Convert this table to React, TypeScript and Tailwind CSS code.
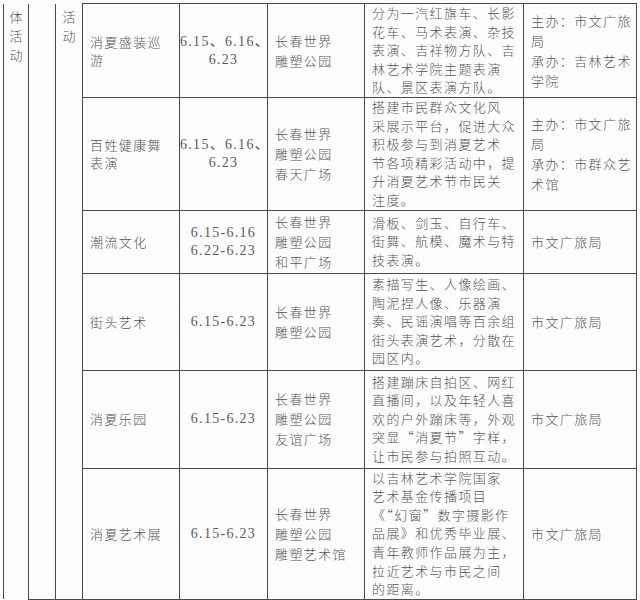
const rows = [
  {
    h: "h-[94px]",
    name: ["消夏盛装巡", "游"],
    date: ["6.15、6.16、", "6.23"],
    place: ["长春世界", "雕塑公园"],
    desc: [
      "分为一汽红旗车、长影",
      "花车、马术表演、杂技",
      "表演、吉祥物方队、吉",
      "林艺术学院主题表演",
      "队、景区表演方队。",
    ],
    org: ["主办：市文广旅", "局", "承办：吉林艺术", "学院"],
  },
  {
    h: "h-[112px]",
    name: ["百姓健康舞", "表演"],
    date: ["6.15、6.16、", "6.23"],
    place: ["长春世界", "雕塑公园", "春天广场"],
    desc: [
      "搭建市民群众文化风",
      "采展示平台，促进大众",
      "积极参与到消夏艺术",
      "节各项精彩活动中，提",
      "升消夏艺术节市民关",
      "注度。",
    ],
    org: ["主办：市文广旅", "局", "承办：市群众艺", "术馆"],
  },
  {
    h: "h-[63px]",
    name: ["潮流文化"],
    date: ["6.15-6.16", "6.22-6.23"],
    place: ["长春世界", "雕塑公园", "和平广场"],
    desc: ["滑板、剑玉、自行车、", "街舞、航模、魔术与特", "技表演。"],
    org: ["市文广旅局"],
  },
  {
    h: "h-[97px]",
    name: ["街头艺术"],
    date: ["6.15-6.23"],
    place: ["长春世界", "雕塑公园"],
    desc: [
      "素描写生、人像绘画、",
      "陶泥捏人像、乐器演",
      "奏、民谣演唱等百余组",
      "街头表演艺术，分散在",
      "园区内。",
    ],
    org: ["市文广旅局"],
  },
  {
    h: "h-[98px]",
    name: ["消夏乐园"],
    date: ["6.15-6.23"],
    place: ["长春世界", "雕塑公园", "友谊广场"],
    desc: [
      "搭建蹦床自拍区、网红",
      "直播间，以及年轻人喜",
      "欢的户外蹦床等，外观",
      "突显“消夏节”字样，",
      "让市民参与拍照互动。",
    ],
    org: ["市文广旅局"],
  },
  {
    h: "h-[131px]",
    name: ["消夏艺术展"],
    date: ["6.15-6.23"],
    place: ["长春世界", "雕塑公园", "雕塑艺术馆"],
    desc: [
      "以吉林艺术学院国家",
      "艺术基金传播项目",
      "《“幻窗”数字摄影作",
      "品展》和优秀毕业展、",
      "青年教师作品展为主，",
      "拉近艺术与市民之间",
      "的距离。",
    ],
    org: ["市文广旅局"],
  },
];

function Lines({ items }: { items: string[] }) {
  return (
    <>
      {items.map((t, i) => (
        <div key={i} className="whitespace-nowrap">
          {t}
        </div>
      ))}
    </>
  );
}

export default function App() {
  const cell = "border border-[#4a4a4a] align-middle";
  return (
    <div
      className="w-[640px] h-[600px] bg-[#fdfdfd] pt-[3px] pl-[3px] overflow-hidden text-[#555] text-[13px] tracking-[1.4px]"
      style={{ fontFamily: '"Noto Sans CJK SC", sans-serif' }}
    >
      <table className="table-fixed border-collapse w-[633px]">
        <colgroup>
          <col className="w-[25px]" />
          <col className="w-[27px]" />
          <col className="w-[27px]" />
          <col className="w-[97px]" />
          <col className="w-[88px]" />
          <col className="w-[97px]" />
          <col className="w-[159px]" />
          <col className="w-[113px]" />
        </colgroup>
        <tbody>
          {rows.map((r, i) => (
            <tr key={i} className={r.h}>
              {i === 0 && (
                <>
                  <td
                    rowSpan={6}
                    className="border-x border-[#4a4a4a] align-top text-center leading-[19px] pt-[3px] tracking-normal font-light"
                  >
                    <div>体</div>
                    <div>活</div>
                    <div>动</div>
                  </td>
                  <td rowSpan={6} className="border border-t-0 border-[#4a4a4a]" />
                  <td
                    rowSpan={6}
                    className="border border-t-0 border-[#4a4a4a] align-top text-center leading-[19px] pt-[3px] tracking-normal font-light"
                  >
                    <div>活</div>
                    <div>动</div>
                  </td>
                </>
              )}
              <td className={`${cell} pl-[7px] leading-[18px] font-light`}>
                <Lines items={r.name} />
              </td>
              <td
                className={`${cell} text-center leading-[18px] text-[14px] tracking-[1.3px] text-[#5a5a5a]`}
                style={{ fontFamily: '"Liberation Serif", "Noto Sans CJK SC", serif' }}
              >
                <Lines items={r.date} />
              </td>
              <td className={`${cell} pl-[7px] leading-[20px] font-light`}>
                <Lines items={r.place} />
              </td>
              <td className={`${cell} pl-[7px] leading-[18.6px] font-light`}>
                <Lines items={r.desc} />
              </td>
              <td className={`${cell} pl-[7px] leading-[20px] font-light`}>
                <Lines items={r.org} />
              </td>
            </tr>
          ))}
        </tbody>
      </table>
    </div>
  );
}
